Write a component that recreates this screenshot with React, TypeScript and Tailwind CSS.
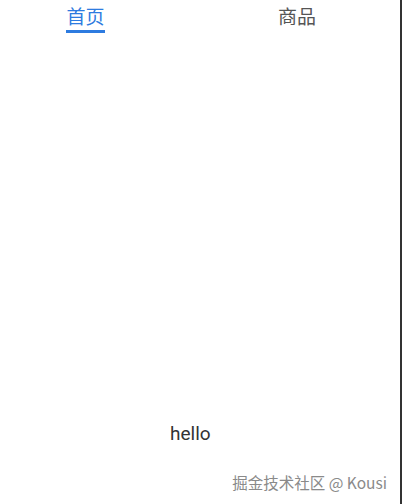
export default function App() {
  return (
    <div
      className="relative flex h-[504px] w-[402px] flex-col border-r-2 border-[#333] bg-white"
      style={{ fontFamily: '"Noto Sans CJK SC", Roboto, sans-serif' }}
    >
      {/* Tabs */}
      <div className="flex h-[36px] items-start pt-[3px]">
        <div className="ml-[66px] flex flex-col items-center">
          <span className="text-[19px] leading-[26px] text-[#2d7be0]">首页</span>
          <span className="mt-[1px] h-[3px] w-[39px] bg-[#2d7be0]" />
        </div>
        <div className="ml-[173px] flex flex-col items-center">
          <span className="text-[19px] leading-[26px] text-[#555]">商品</span>
        </div>
      </div>

      {/* Content */}
      <div className="flex flex-1 items-end pb-[58px] pl-[170px]">
        <span
          className="text-[19px] leading-[24px] text-[#333]"
          style={{ fontFamily: 'Roboto, sans-serif' }}
        >
          hello
        </span>
      </div>

      {/* Watermark */}
      <div className="absolute bottom-[12px] right-[13px] text-[15.5px] leading-[20px] text-[#8a8a8a] [text-shadow:0_0_1px_rgba(255,255,255,0.9)]">
        掘金技术社区 @ Kousi
      </div>
    </div>
  );
}
